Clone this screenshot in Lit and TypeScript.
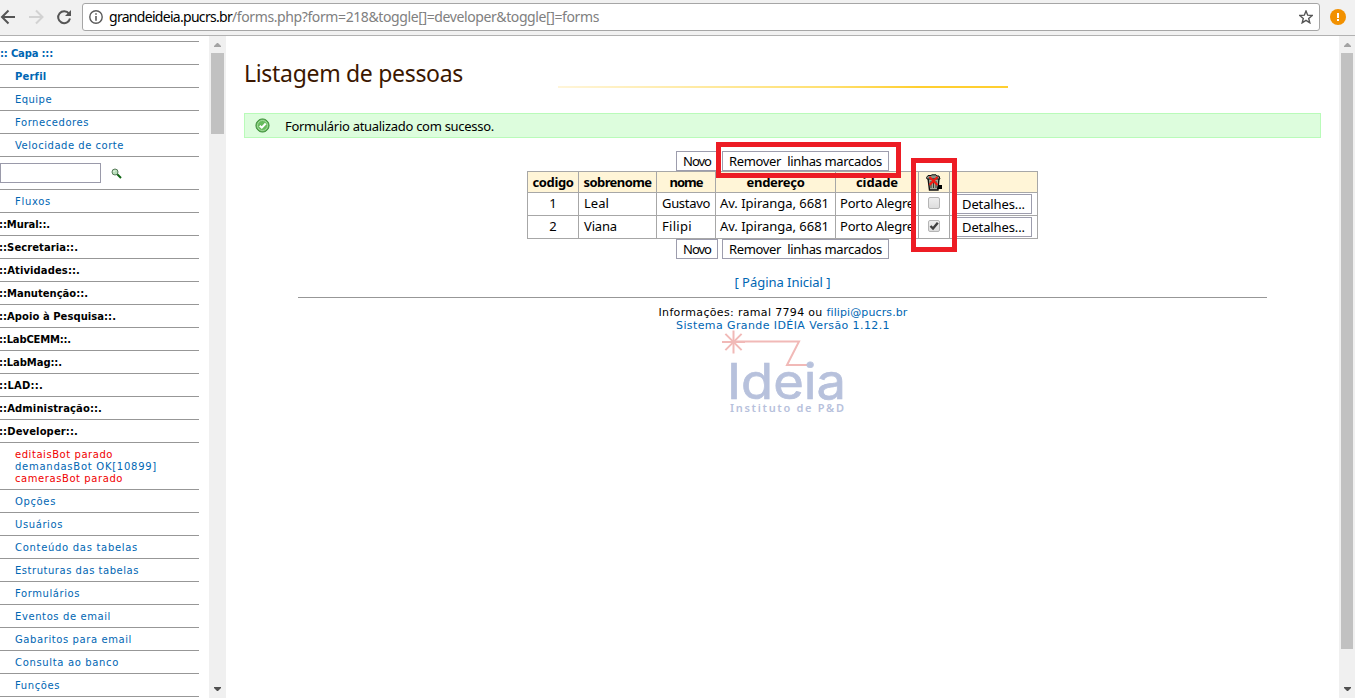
import { LitElement, html, css, svg } from "lit";
import { customElement, property } from "lit/decorators.js";

// A run of text tracked so that it fills the given width.
@customElement("fit-text")
class FitText extends LitElement {
  static styles = css`
    :host { display: inline-block; white-space: pre; }
    .run { display: inline-block; }
  `;
  @property({ type: Number }) w = 0;
  @property() text = "";
  firstUpdated() {
    const run = this.renderRoot.querySelector(".run") as HTMLElement;
    const natural = run.getBoundingClientRect().width;
    run.style.letterSpacing = `${(this.w - natural) / this.text.length}px`;
  }
  render() {
    return html`<span class="run">${this.text}</span>`;
  }
}

const fit = (text: string, w: number) => html`<fit-text .text=${text} .w=${w}></fit-text>`;

@customElement("scroll-bar")
class ScrollBar extends LitElement {
  static styles = css`
    :host { display: flex; flex-direction: column; background: #f0f0f0; box-sizing: border-box; padding: 7px 2px; }
    .arrow { display: block; align-self: center; flex: none; }
    .thumb { background: #c1c1c1; margin-top: 6px; flex: none; }
    .space { flex: 1; }
  `;
  @property({ type: Number }) thumb = 0;
  render() {
    return html`
      <svg class="arrow" width="7" height="4"><path d="M3 0H4L7 3V4H0V3Z" fill="#a3a3a3" /></svg>
      <div class="thumb" style="height:${this.thumb}px"></div>
      <div class="space"></div>
      <svg class="arrow" width="7" height="4"><path d="M0 0H7V1L4 4H3L0 1Z" fill="#505050" /></svg>
    `;
  }
}

type Item = [string, number];
const top: Item[] = [["Equipe", 37], ["Fornecedores", 74], ["Velocidade de corte", 109]];
const sections: Item[] = [
  ["::Mural::.", 50], ["::Secretaria::.", 78], ["::Atividades::.", 80], ["::Manutenção::.", 88],
  ["::Apoio à Pesquisa::.", 116], ["::LabCEMM::.", 71], ["::LabMag::.", 62], ["::LAD::.", 43],
  ["::Administração::.", 102], ["::Developer::.", 78],
];
const tools: Item[] = [
  ["Opções", 41], ["Usuários", 48], ["Conteúdo das tabelas", 123], ["Estruturas das tabelas", 124],
  ["Formulários", 65], ["Eventos de email", 96], ["Gabaritos para email", 117], ["Consulta ao banco", 104], ["Funções", 45],
];

@customElement("side-menu")
class SideMenu extends LitElement {
  static styles = css`
    :host { display: block; box-sizing: border-box; padding: 5px 10px 0 0; overflow: hidden; background: #fff;
      font: 10px "DejaVu Sans", Verdana, sans-serif; color: #0066b3; }
    .list { border-top: 1px solid #979797; }
    .row { height: 22px; border-bottom: 1px solid #979797; display: flex; align-items: center; padding-left: 15px; }
    .flush { padding-left: 0; font-weight: bold; }
    .head { color: #000; }
    .head fit-text { margin-left: -1px; }
    .strong { font-weight: bold; }
    .search { height: 32px; padding-left: 0; gap: 10px; }
    .box { width: 101px; height: 20px; box-sizing: border-box; border: 1px solid #9a9aaa; }
    .bots { height: 44px; padding-top: 2px; flex-direction: column; align-items: flex-start; justify-content: center; line-height: 12px; }
    .off { color: #f00000; }
  `;
  render() {
    return html`<div class="list">
      <div class="row flush">${fit(":: Capa :::", 53)}</div>
      <div class="row strong">${fit("Perfil", 31)}</div>
      ${top.map(([t, w]) => html`<div class="row">${fit(t, w)}</div>`)}
      <div class="row search">
        <div class="box"></div>
        <svg width="11" height="11" viewBox="0 0 11 11">
          <path d="M6 6L10 10" stroke="#0b6410" stroke-width="2" />
          <circle cx="4" cy="4" r="3" fill="#b9dfba" stroke="#5a7d5c" />
          <path d="M2.5 4L4 2.5" stroke="#fff" />
        </svg>
      </div>
      <div class="row">${fit("Fluxos", 36)}</div>
      ${sections.map(([t, w]) => html`<div class="row flush head">${fit(t, w + 1)}</div>`)}
      <div class="row bots">
        <div class="off">${fit("editaisBot parado", 98)}</div>
        <div>${fit("demandasBot OK[10899]", 142)}</div>
        <div class="off">${fit("camerasBot parado", 108)}</div>
      </div>
      ${tools.map(([t, w]) => html`<div class="row">${fit(t, w)}</div>`)}
    </div>`;
  }
}

@customElement("address-bar")
class AddressBar extends LitElement {
  static styles = css`
    :host { display: flex; align-items: flex-start; box-sizing: border-box; height: 36px; background: #f1f1f1;
      border-bottom: 1px solid #b1b1b1; padding: 3px 9px 0 0; font: 14px "Noto Sans", sans-serif; }
    .nav { width: 82px; flex: none; height: 28px; }
    .field { flex: 1; height: 28px; box-sizing: border-box; border: 1px solid #a6a6a6; border-radius: 3px; background: #fff;
      display: flex; align-items: center; padding: 0 6px 0 6px; }
    .url { margin-left: 6px; flex: 1; display: flex; color: #808080; line-height: 26px; }
    .host { color: #000; }
    .warn { margin: 6px 0 0 10px; flex: none; }
  `;
  render() {
    return html`
      <svg class="nav" viewBox="0 3 82 28" fill="none">
        <path d="M15 17H2.5M8.5 10.5L2 17L8.5 23.5" stroke="#555" stroke-width="2" />
        <path d="M29 17H42M36 10.5L42.5 17L36 23.5" stroke="#d2d2d2" stroke-width="2" />
        <path d="M69 13.6A6 6 0 1 0 70 18.6" stroke="#555" stroke-width="2" />
        <path d="M71 10V16H65Z" fill="#555" />
      </svg>
      <div class="field">
        <svg width="14" height="14" viewBox="0 0 14 14">
          <circle cx="7" cy="7" r="6.2" fill="none" stroke="#5a5a5a" stroke-width="1.4" />
          <path d="M6.2 3.2H7.8V4.8H6.2ZM6.2 6H7.8V10.8H6.2Z" fill="#5a5a5a" />
        </svg>
        <div class="url"><span class="host">${fit("grandeideia.pucrs.br", 123)}</span>${fit("/forms.php?form=218&toggle[]=developer&toggle[]=forms", 367)}</div>
        <svg width="14" height="14" viewBox="0 0 14 14">
          <path d="M7 1L8.7 5.2L13.2 5.5L9.7 8.4L10.8 12.8L7 10.4L3.2 12.8L4.3 8.4L.8 5.5L5.3 5.2Z" fill="none" stroke="#555" stroke-width="1.4" />
        </svg>
      </div>
      <svg class="warn" width="16" height="16"><circle cx="8" cy="8" r="8" fill="#f29100" /><path d="M7 4H9V9H7ZM7 10H9V12H7Z" fill="#fff" /></svg>
    `;
  }
}

const people = [
  { id: "1", last: ["Leal", 25], first: ["Gustavo", 48], checked: false },
  { id: "2", last: ["Viana", 33], first: ["Filipi", 30], checked: true },
] as { id: string; last: Item; first: Item; checked: boolean }[];

@customElement("people-page")
class PeoplePage extends LitElement {
  static styles = css`
    :host { display: block; box-sizing: border-box; padding: 0 18px; background: #fff; overflow: hidden;
      font: 13px "Noto Sans", sans-serif; color: #000; }
    .title { display: flex; height: 77px; color: #3b1700; font-size: 23px; line-height: 74px; }
    .name { width: 314px; }
    .rule { width: 450px; height: 2px; margin-top: 50px; background: linear-gradient(90deg, #fff5d9, #ffe070 60%, #ffcf30 80%, #ffcf30); }
    .notice { height: 25px; box-sizing: border-box; border: 1px solid #b9fbb9; background: #ddfddd; display: flex; align-items: center; padding-left: 10px; }
    .notice fit-text { margin: 1px 0 0 15px; }
    .work { display: flex; flex-direction: column; align-items: center; padding-top: 13px; position: relative; }
    .actions { display: flex; gap: 4px; width: 213px; }
    .btn { height: 20px; box-sizing: border-box; border: 1px solid #9d9dad; background: #fff; display: flex; align-items: center; justify-content: center; }
    .new { width: 42px; }
    .remove { width: 167px; }
    .more { width: 78px; justify-content: flex-start; padding-left: 7px; margin-top: 1px; }
    .grid { display: grid; grid-template-columns: 51px 78px 59px 120px 83px 31px 88px; border: solid #a7a7a7; border-width: 1px 0 0 1px; }
    .cell { box-sizing: border-box; height: 23px; border: solid #a7a7a7; border-width: 0 1px 1px 0; display: flex; align-items: center; padding: 0 0 2px 5px; white-space: nowrap; }
    .th { height: 21px; background: #fff5d7; font-weight: bold; padding-bottom: 0; }
    .mid { justify-content: center; padding-left: 0; }
    .tight { padding-left: 4px; }
    .frame { position: absolute; border: 5px solid #ed1c24; box-sizing: border-box; }
    .around-remove { left: 472px; top: 4px; width: 185px; height: 36px; }
    .around-checks { left: 667px; top: 20px; width: 46px; height: 94px; }
    .check { width: 12px; height: 12px; box-sizing: border-box; border: 1px solid #b5b5b5; border-radius: 2px; background: linear-gradient(#eee, #ddd); }
    .check svg { display: block; overflow: visible; }
    .footer { text-align: center; color: #0066b3; font-size: 12px; }
    .footer > div { height: 13px; line-height: 13px; }
    .footer .home { height: 38px; line-height: 47px; font-size: 13px; }
    .footer .line { height: 1px; margin: 0 54px 8px; background: #979797; }
    .small { font-family: "DejaVu Sans", Verdana, sans-serif; font-size: 11px; padding-left: 1px; }
    .black { color: #000; }
    .logo { display: block; margin: -2px auto 0; overflow: visible; }
    .word { font: 400 49px Inter, sans-serif; }
    .sub { font: 600 11px "Noto Sans", sans-serif; }
  `;
  actions() {
    return html`<div class="actions">
      <div class="btn new">${fit("Novo", 28)}</div>
      <div class="btn remove">${fit("Remover  linhas marcados", 153)}</div>
    </div>`;
  }
  trash() {
    return html`<svg width="18" height="17" viewBox="0 0 18 17">
      <path d="M3 4H14L13 16H4.5Z" fill="#a5aa9a" stroke="#111" stroke-width="1.4" />
      <path d="M1.5 3.5L3 1.5H6L7 .8H11L12 2H14L15 5H2Z" fill="#8b9283" stroke="#111" />
      <path d="M6 7V14M8.5 7V14M11 7V14" stroke="#333b30" />
      <path d="M13 11H17V15H12Z" fill="#000" />
      <path d="M4.5 3L12.5 11M12.5 3L4.5 11" stroke="#f5180f" stroke-width="2" />
    </svg>`;
  }
  logo() {
    const rays = [0, 45, 90, 135].map((a) => svg`<path d="M-11.5 0H11.5" transform="translate(12.5 12) rotate(${a})" />`);
    return html`<svg class="logo" width="124" height="84" viewBox="0 0 124 84">
      <g fill="none" stroke="#f1b9b7" stroke-width="2">
        ${rays}
        <path d="M12 11.5H78L66 35H86" />
      </g>
      <g fill="#b7c1dc" stroke="#b7c1dc">
        <text class="word" x="6" y="68.5" textLength="119" lengthAdjust="spacingAndGlyphs" stroke-width=".7">Ideia</text>
        <text class="sub" x="9" y="82" textLength="114" stroke="none">Instituto de P&amp;D</text>
      </g>
    </svg>`;
  }
  render() {
    return html`
      <div class="title"><div class="name">${fit("Listagem de pessoas", 219)}</div><div class="rule"></div></div>
      <div class="notice">
        <svg width="15" height="15" viewBox="0 0 15 15">
          <circle cx="7.5" cy="7.5" r="6.6" fill="#66bb5c" stroke="#438f40" />
          <circle cx="7.5" cy="7.5" r="5" fill="none" stroke="#a6dba0" />
          <path d="M4.7 7.7L6.8 9.7L10.7 5.5" fill="none" stroke="#fff" stroke-width="2" />
        </svg>
        ${fit("Formulário atualizado com sucesso.", 209)}
      </div>
      <div class="work">
        ${this.actions()}
        <div class="grid">
          ${([["codigo", 41], ["sobrenome", 68], ["nome", 33], ["endereço", 58], ["cidade", 42]] as Item[]).map(
            ([t, w]) => html`<div class="cell th mid">${fit(t, w)}</div>`)}
          <div class="cell th mid">${this.trash()}</div>
          <div class="cell th"></div>
          ${people.map((p) => html`
            <div class="cell mid">${p.id}</div>
            <div class="cell">${fit(...p.last)}</div>
            <div class="cell">${fit(...p.first)}</div>
            <div class="cell tight">${fit("Av. Ipiranga, 6681", 109)}</div>
            <div class="cell tight">${fit("Porto Alegre", 74)}</div>
            <div class="cell mid"><div class="check">${p.checked
              ? html`<svg width="10" height="10"><path d="M1.5 5L4 7.5L8.8 1.8" fill="none" stroke="#404040" stroke-width="2.4" /></svg>` : ""}</div></div>
            <div class="cell tight"><div class="btn more">${fit("Detalhes...", 63)}</div></div>`)}
        </div>
        ${this.actions()}
        <div class="frame around-remove"></div>
        <div class="frame around-checks"></div>
      </div>
      <div class="footer">
        <div class="home">${fit("[ Página Inicial ]", 96)}</div>
        <div class="line"></div>
        <div class="small"><span class="black">${fit("Informações: ramal 7794 ou ", 168)}</span>${fit("filipi@pucrs.br", 81)}</div>
        <div class="small">${fit("Sistema Grande IDÉIA Versão 1.12.1", 214)}</div>
        ${this.logo()}
      </div>
    `;
  }
}

@customElement("app-root")
class AppRoot extends LitElement {
  static styles = css`
    :host { display: flex; flex-direction: column; height: 698px; overflow: hidden; background: #fff; }
    .body { flex: 1; min-height: 0; display: grid; grid-template-columns: 209px 17px 1fr 16px; }
  `;
  render() {
    return html`
      <address-bar></address-bar>
      <div class="body">
        <side-menu></side-menu>
        <scroll-bar .thumb=${81}></scroll-bar>
        <people-page></people-page>
        <scroll-bar .thumb=${596}></scroll-bar>
      </div>
    `;
  }
}
